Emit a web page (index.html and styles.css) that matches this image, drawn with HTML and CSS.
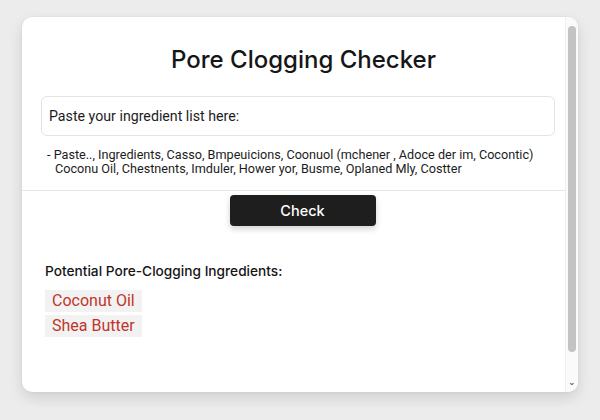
FILE: index.html
```html
<!DOCTYPE html>
<html>
<head>
<meta charset="utf-8">
<link rel="stylesheet" href="styles.css">
</head>
<body>
<div class="window">
  <div class="content">
    <h1 class="title">Pore Clogging Checker</h1>
    <div class="input-box">Paste your ingredient list here:</div>
    <div class="list">
      <div class="list-line">- Paste.., Ingredients, Casso, Bmpeuicions, Coonuol (mchener , Adoce der im, Cocontic)</div>
      <div class="list-line indent">Coconu Oil, Chestnents, Imduler, Hower yor, Busme, Oplaned Mly, Costter</div>
    </div>
    <div class="divider"></div>
    <div class="btn-row"><button class="check-btn">Check</button></div>
    <div class="results">
      <div class="results-label">Potential Pore-Clogging Ingredients:</div>
      <div class="tags">
        <span class="tag">Coconut Oil</span>
        <span class="tag">Shea Butter</span>
      </div>
    </div>
  </div>
  <div class="scrollbar">
    <div class="thumb"></div>
    <div class="arrow">&#8964;</div>
  </div>
</div>
</body>
</html>
```
FILE: styles.css
```css
html, body {
  margin: 0;
  padding: 0;
}
body {
  width: 600px;
  height: 420px;
  background: #ececec;
  font-family: Roboto, "Noto Sans", sans-serif;
  color: #1a1a1a;
  padding-top: 17px;
  padding-left: 22px;
  box-sizing: border-box;
}
.window {
  width: 556px;
  height: 375px;
  background: #fff;
  border-radius: 10px;
  box-shadow: 0 6px 14px rgba(0,0,0,0.12), 0 0 2px rgba(0,0,0,0.08);
  display: flex;
  overflow: hidden;
}
.content {
  flex: 1;
  display: flex;
  flex-direction: column;
}
.title {
  margin: 28px 0 0 0;
  text-align: center;
  font-family: Inter, Roboto, sans-serif;
  font-size: 24px;
  font-weight: 500;
  line-height: 30px;
  color: #161616;
  padding-left: 20px;
}
.input-box {
  margin: 21px 0 0 19px;
  width: 505px;
  height: 38px;
  border: 1px solid #e3e3e3;
  border-radius: 6px;
  font-size: 14.2px;
  line-height: 38px;
  padding-left: 7px;
  color: #1c1c1c;
}
.list {
  margin: 12px 0 0 25px;
  font-size: 12.65px;
  line-height: 13.5px;
  color: #1c1c1c;
}
.indent {
  padding-left: 8px;
}
.divider {
  margin-top: 15px;
  height: 1px;
  background: #e8e8e8;
}
.btn-row {
  display: flex;
  justify-content: center;
  padding-top: 4px;
  padding-left: 18px;
}
.check-btn {
  width: 146px;
  height: 31px;
  border: none;
  border-radius: 4px;
  background: #1e1e1e;
  color: #fff;
  font-family: Inter, Roboto, sans-serif;
  font-size: 14.5px;
  font-weight: 500;
  box-shadow: 0 3px 6px rgba(0,0,0,0.18);
}
.results {
  margin: 36px 0 0 23px;
}
.results-label {
  font-family: Inter, Roboto, sans-serif;
  font-size: 13.7px;
  font-weight: 500;
  line-height: 18px;
  color: #151515;
}
.tags {
  margin-top: 10px;
  display: flex;
  flex-direction: column;
  align-items: flex-start;
  gap: 3px;
}
.tag {
  background: #f2f2f2;
  color: #c0352b;
  font-size: 16px;
  line-height: 22px;
  padding: 0 7px;
  min-width: 83px;
}
.scrollbar {
  width: 12px;
  position: relative;
  background: #fafafa;
  border-left: 1px solid #f0f0f0;
}
.thumb {
  margin: 9px auto 0 auto;
  width: 8px;
  height: 326px;
  background: #c3c3c3;
  border-radius: 4px;
}
.arrow {
  position: absolute;
  bottom: 5px;
  left: 0;
  width: 12px;
  text-align: center;
  font-size: 9px;
  line-height: 9px;
  color: #333;
}
```
